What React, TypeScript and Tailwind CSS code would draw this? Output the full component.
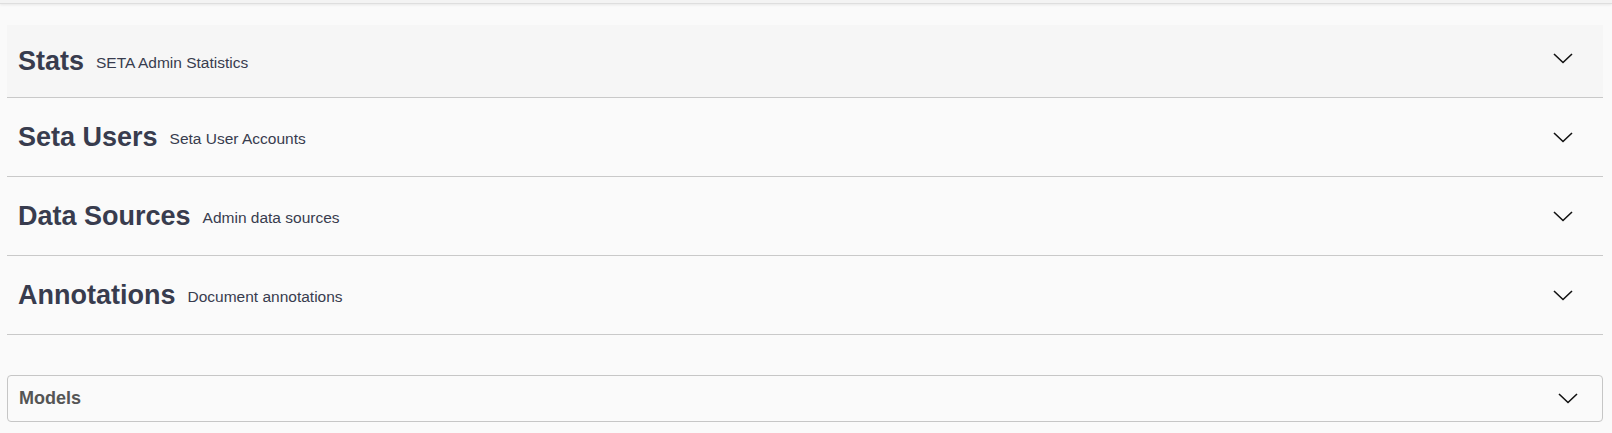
import React from "react";

const Chevron = ({ up = false }: { up?: boolean }) => (
  <svg
    width="20"
    height="11"
    viewBox="0 0 20 11"
    fill="none"
    className={`shrink-0 ${up ? "mb-[6px]" : ""}`}
  >
    <path d="M1 1 L10 9.5 L19 1" stroke="#111" strokeWidth="1.6" />
  </svg>
);

const sections = [
  { title: "Stats", sub: "SETA Admin Statistics", first: true },
  { title: "Seta Users", sub: "Seta User Accounts" },
  { title: "Data Sources", sub: "Admin data sources" },
  { title: "Annotations", sub: "Document annotations" },
];

export default function App() {
  return (
    <div
      className="min-h-screen bg-[#fafafa] text-[#383c4e]"
      style={{ fontFamily: '"Liberation Sans", Arial, sans-serif' }}
    >
      <div className="h-[4px] bg-[#f3f3f3] border-b border-[#dedede] shadow-[0_1px_3px_rgba(0,0,0,0.08)]" />
      <div className="pl-[7px] pr-[9px] pt-[21px]">
        {sections.map((s) => (
          <div
            key={s.title}
            className={`flex items-center justify-between border-b border-[#c9c9c9] pl-[11px] pr-[30px] ${
              s.first ? "h-[73px] bg-[#f6f6f6]" : "h-[79px]"
            }`}
          >
            <div className="flex items-center gap-[12px]">
              <span className="text-[27px] font-bold leading-none">{s.title}</span>
              <span className="pt-[3px] text-[15.5px] leading-none">{s.sub}</span>
            </div>
            <Chevron up={!!s.first} />
          </div>
        ))}
        <div className="mt-[40px] flex h-[47px] items-center justify-between rounded-[4px] border border-[#c6c6c6] pl-[11px] pr-[24px]">
          <span className="text-[18px] font-bold text-[#555555]">Models</span>
          <Chevron />
        </div>
      </div>
    </div>
  );
}
